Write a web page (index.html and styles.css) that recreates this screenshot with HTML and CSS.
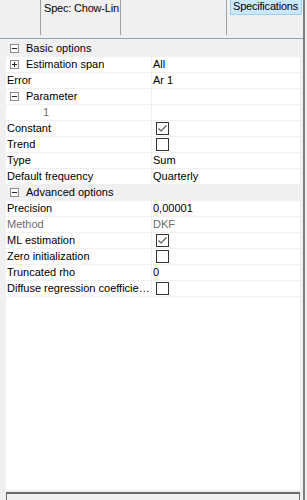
FILE: index.html
```html
<!DOCTYPE html>
<html lang="en">
<head>
  <meta charset="UTF-8" />
  <title>Specifications</title>
  <link rel="stylesheet" href="styles.css">
</head>
<body>
  <div class="window">
    <div class="main">
      <!-- tab strip -->
      <div class="tabs">
        <div class="tab-chow">Spec: Chow-Lin</div>
        <div class="tab-sep"></div>
        <div class="tab-spec">Specifications</div>
      </div>

      <!-- property grid -->
      <div class="grid">
        <div class="row category">
          <span class="toggle minus"></span>Basic options
        </div>
        <div class="row">
          <div class="name"><span class="toggle plus"></span>Estimation span</div>
          <div class="value">All</div>
        </div>
        <div class="row">
          <div class="name">Error</div>
          <div class="value">Ar 1</div>
        </div>
        <div class="row">
          <div class="name"><span class="toggle minus"></span>Parameter</div>
          <div class="value"></div>
        </div>
        <div class="row">
          <div class="name sub">1</div>
          <div class="value"></div>
        </div>
        <div class="row">
          <div class="name">Constant</div>
          <div class="value"><span class="check checked"><svg width="11" height="11" viewBox="0 0 11 11"><path d="M1.5 5.5 L4 8 L9.5 2.5" fill="none" stroke="#5a5a5a" stroke-width="1.2"/></svg></span></div>
        </div>
        <div class="row">
          <div class="name">Trend</div>
          <div class="value"><span class="check"></span></div>
        </div>
        <div class="row">
          <div class="name">Type</div>
          <div class="value">Sum</div>
        </div>
        <div class="row">
          <div class="name">Default frequency</div>
          <div class="value">Quarterly</div>
        </div>
        <div class="row category">
          <span class="toggle minus"></span>Advanced options
        </div>
        <div class="row">
          <div class="name">Precision</div>
          <div class="value">0,00001</div>
        </div>
        <div class="row readonly">
          <div class="name">Method</div>
          <div class="value">DKF</div>
        </div>
        <div class="row">
          <div class="name">ML estimation</div>
          <div class="value"><span class="check checked"><svg width="11" height="11" viewBox="0 0 11 11"><path d="M1.5 5.5 L4 8 L9.5 2.5" fill="none" stroke="#5a5a5a" stroke-width="1.2"/></svg></span></div>
        </div>
        <div class="row">
          <div class="name">Zero initialization</div>
          <div class="value"><span class="check"></span></div>
        </div>
        <div class="row">
          <div class="name">Truncated rho</div>
          <div class="value">0</div>
        </div>
        <div class="row">
          <div class="name">Diffuse regression coefficients</div>
          <div class="value"><span class="check"></span></div>
        </div>
      </div>

      <!-- description panel -->
      <div class="desc"></div>
    </div>
    <div class="edge"></div>
  </div>
</body>
</html>
```

FILE: styles.css
```css
html, body {
  margin: 0;
  padding: 0;
  background: #f0f0f0;
  overflow: hidden;
}
body {
  font-family: "Liberation Sans", Arial, sans-serif;
  font-size: 11px;
  color: #000;
}
.window {
  display: flex;
  height: 500px;
}
.main {
  width: 303px;
  display: flex;
  flex-direction: column;
}
.edge {
  width: 2px;
  background: #7d7d7d;
}

/* tab strip */
.tabs {
  flex: none;
  display: flex;
  align-items: flex-start;
  height: 38px;
  border-bottom: 1px solid #8da2b8;
  white-space: nowrap;
}
.tab-chow {
  margin-left: 40px;
  width: 81px;
  height: 35px;
  padding: 2px 0 0 3px;
  box-sizing: border-box;
  border-left: 1px solid #a0a0a0;
  border-right: 1px solid #a0a0a0;
  letter-spacing: -0.2px;
}
.tab-sep {
  margin-left: 105px;
  height: 35px;
  border-left: 1px solid #a0a0a0;
}
.tab-spec {
  margin-left: 3px;
  width: 72px;
  height: 15px;
  box-sizing: border-box;
  padding: 0 0 0 2px;
  background: #cce8ff;
  border: 1px solid #99d1ff;
  border-top: 0;
  letter-spacing: -0.2px;
}

/* property grid */
.grid {
  flex: none;
  margin: 2px 3px 0 6px;
  height: 449px;
  background: #fff;
}
.row {
  display: flex;
  height: 15px;
  line-height: 15px;
  border-bottom: 1px solid #f0f0f0;
}
.row.category {
  background: #f0f0f0;
  padding-left: 4px;
  align-items: center;
}
.name {
  flex: none;
  width: 146px;
  padding-left: 1px;
  box-sizing: border-box;
  border-right: 1px solid #f0f0f0;
  white-space: nowrap;
  overflow: hidden;
  text-overflow: ellipsis;
}
.name .toggle {
  display: inline-block;
  vertical-align: -1px;
  margin-left: 3px;
}
.name.sub {
  padding-left: 37px;
  color: #6d6d6d;
}
.value {
  flex: 1;
  padding-left: 1px;
  display: flex;
  align-items: center;
}
.readonly .name,
.readonly .value {
  color: #6d6d6d;
}

/* expand/collapse boxes */
.toggle {
  position: relative;
  flex: none;
  width: 9px;
  height: 9px;
  box-sizing: border-box;
  border: 1px solid #8b8b8b;
  background: #fff;
  margin-right: 7px;
}
.toggle::before {
  content: "";
  position: absolute;
  left: 1px;
  top: 3px;
  width: 5px;
  height: 1px;
  background: #222;
}
.toggle.plus::after {
  content: "";
  position: absolute;
  left: 3px;
  top: 1px;
  width: 1px;
  height: 5px;
  background: #222;
}

/* checkboxes */
.check {
  display: block;
  width: 13px;
  height: 13px;
  box-sizing: border-box;
  margin-left: 3px;
  border: 1px solid #333;
  background: #fff;
}
.check svg {
  display: block;
}

/* description panel */
.desc {
  flex: none;
  margin: 2px 3px 0 6px;
  height: 8px;
  box-sizing: border-box;
  border-top: 2px solid #6b6b6b;
  border-left: 1px solid #6b6b6b;
  border-right: 1px solid #6b6b6b;
}
```
